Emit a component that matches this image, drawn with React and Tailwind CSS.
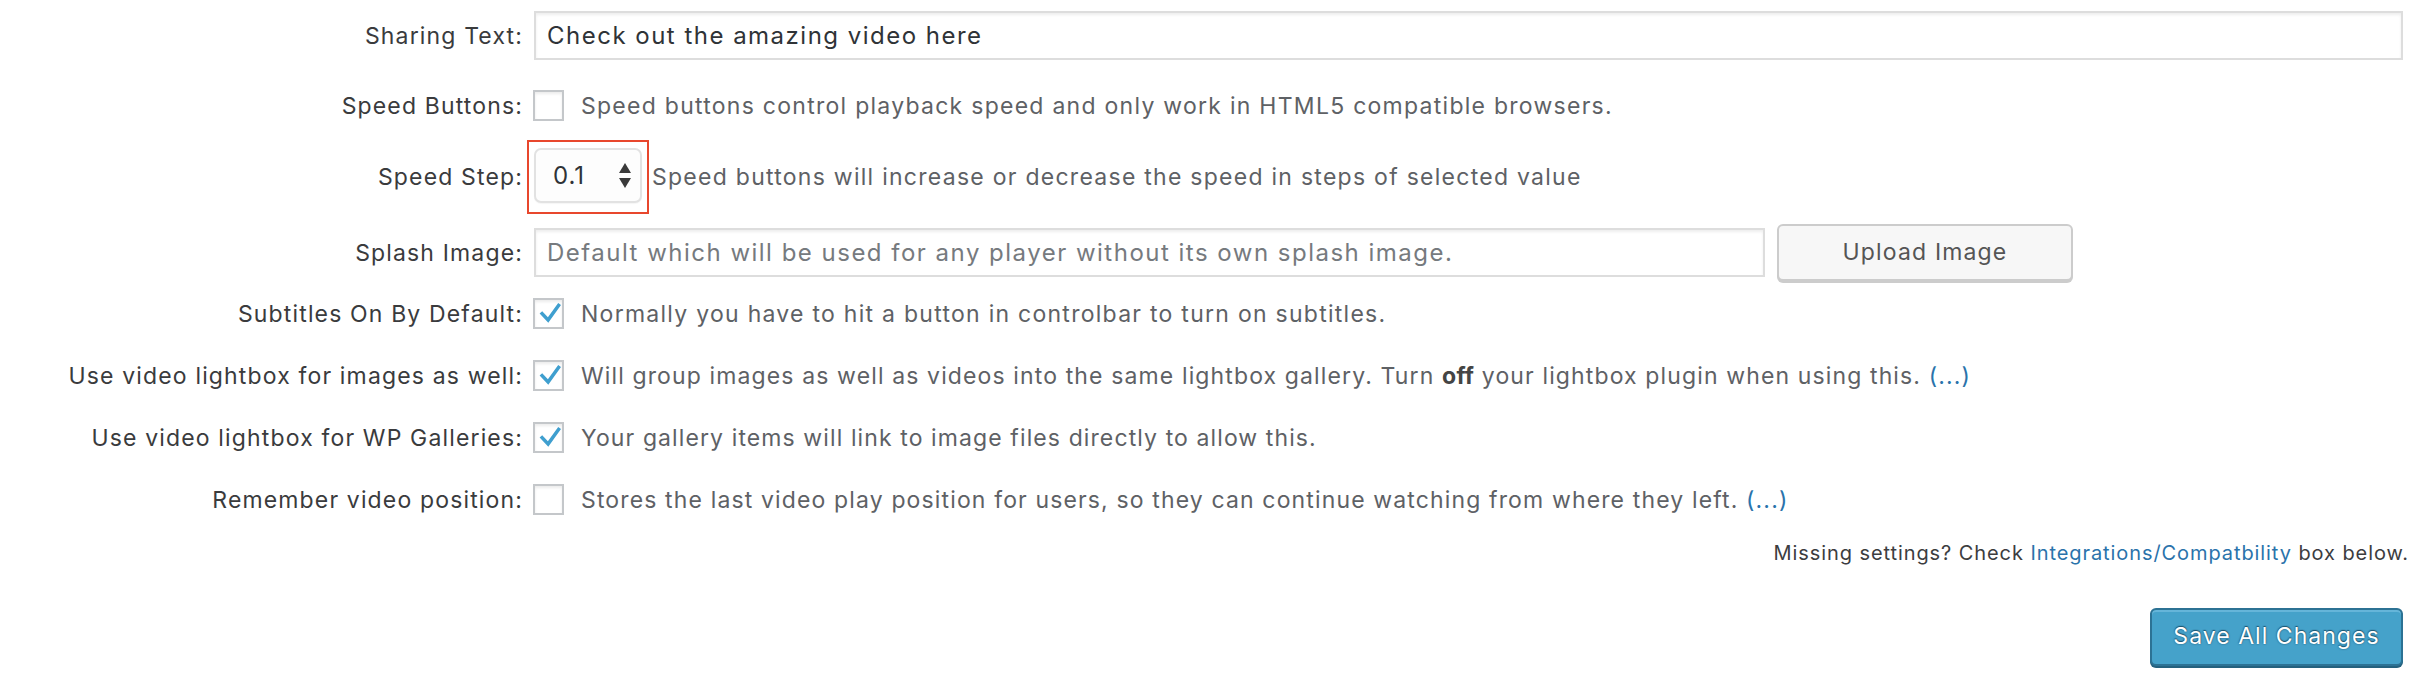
import React from "react";

function Tick() {
  return (
    <svg width="27" height="27" viewBox="2 2 27 27" className="block">
      <path d="M6.6 15.6 L9.2 13.2 L14.9 19.2 L25.2 5 L28 7.1 L15.3 24.8 Z" fill="#3f9fcf" />
    </svg>
  );
}

function Checkbox({ checked }) {
  return (
    <span className="ml-[-1px] flex h-[31px] w-[31px] shrink-0 items-center justify-center border-2 border-[#c4c7ca] bg-white shadow-[inset_0_2px_3px_rgba(0,0,0,0.08)]">
      {checked ? <Tick /> : null}
    </span>
  );
}

function Row({ label, children, className }) {
  return (
    <div className={"flex items-center " + (className || "")}>
      <div className="w-[523px] shrink-0 whitespace-nowrap text-right tracking-[0.05em] text-[#3a3b3d]">{label}</div>
      <div className="ml-[11px] flex min-w-0 flex-1 items-center">{children}</div>
    </div>
  );
}

function Desc({ children, className }) {
  return (
    <span className={"whitespace-nowrap text-[#5e6165] " + (className || "tracking-[0.055em]")}>{children}</span>
  );
}

function More() {
  return <span className="text-[#2a73ab]">(...)</span>;
}

export default function App() {
  return (
    <div className="h-[690px] w-[2432px] overflow-hidden bg-white pr-[29px] font-['Inter',sans-serif] text-[23px] leading-[28px] antialiased">
      <Row label="Sharing Text:" className="mt-[11px] h-[49px]">
        <div className="flex h-[49px] flex-1 items-center border-2 border-[#dddddd] bg-white pl-[11px] text-[24px] tracking-[0.062em] text-[#2f3337] shadow-[inset_0_2px_3px_rgba(0,0,0,0.07)]">
          Check out the amazing video here
        </div>
      </Row>

      <Row label="Speed Buttons:" className="mt-[30px] h-[31px]">
        <Checkbox checked={false} />
        <Desc className="ml-[17px] tracking-[0.055em]">
          Speed buttons control playback speed and only work in HTML5 compatible browsers.
        </Desc>
      </Row>

      <Row label="Speed Step:" className="mt-[19px] h-[74px]">
        <div className="ml-[-7px] flex h-[74px] w-[122px] shrink-0 border-2 border-[#e8472d] pl-[5px] pt-[6px]">
          <div className="flex h-[55px] w-[108px] items-center justify-between rounded-[7px] border-2 border-[#e2e2e2] bg-[#fdfdfd] pl-[17px] pr-[8px] text-[24px] tracking-[0.04em] text-[#2f3337] shadow-[0_1px_1px_rgba(0,0,0,0.04)]">
            <span>0.1</span>
            <svg width="14" height="26" viewBox="0 0 14 26" className="block">
              <path d="M7 0 L13 10 L1 10 Z" fill="#3a3a3a" />
              <path d="M1 15 L13 15 L7 25 Z" fill="#3a3a3a" />
            </svg>
          </div>
        </div>
        <Desc className="ml-[3px] tracking-[0.055em]">
          Speed buttons will increase or decrease the speed in steps of selected value
        </Desc>
      </Row>

      <Row label="Splash Image:" className="mt-[10px] h-[57px]">
        <div className="flex h-[49px] w-[1231px] shrink-0 items-center border-2 border-[#dddddd] bg-white pl-[11px] text-[24px] tracking-[0.062em] text-[#767a7e] shadow-[inset_0_2px_3px_rgba(0,0,0,0.07)]">
          Default which will be used for any player without its own splash image.
        </div>
        <button className="ml-[12px] flex h-[57px] w-[296px] shrink-0 items-center justify-center rounded-[6px] border-2 border-[#cccccc] bg-[#f7f7f7] pb-[2px] text-[23px] tracking-[0.05em] text-[#555555] shadow-[0_2px_0_#cccccc]">
          Upload Image
        </button>
      </Row>

      <Row label="Subtitles On By Default:" className="mt-[17px] h-[31px]">
        <Checkbox checked />
        <Desc className="ml-[17px] tracking-[0.055em]">
          Normally you have to hit a button in controlbar to turn on subtitles.
        </Desc>
      </Row>

      <Row label="Use video lightbox for images as well:" className="mt-[31px] h-[31px]">
        <Checkbox checked />
        <Desc className="ml-[17px] tracking-[0.049em]">
          Will group images as well as videos into the same lightbox gallery. Turn{" "}
          <b className="font-bold tracking-[0.01em] text-[#444444]">off</b> your lightbox plugin when using this. <More />
        </Desc>
      </Row>

      <Row label="Use video lightbox for WP Galleries:" className="mt-[31px] h-[31px]">
        <Checkbox checked />
        <Desc className="ml-[17px] tracking-[0.048em]">
          Your gallery items will link to image files directly to allow this.
        </Desc>
      </Row>

      <Row label="Remember video position:" className="mt-[31px] h-[31px]">
        <Checkbox checked={false} />
        <Desc className="ml-[17px] tracking-[0.0495em]">
          Stores the last video play position for users, so they can continue watching from where they left. <More />
        </Desc>
      </Row>

      <div className="mr-[-6px] mt-[24px] flex h-[28px] items-center justify-end whitespace-nowrap text-[20px] tracking-[0.046em] text-[#3c3d3f]">
        Missing settings? Check&nbsp;<span className="text-[#2a73ab]">Integrations/Compatbility</span>&nbsp;box below.
      </div>

      <div className="mt-[41px] flex justify-end">
        <button className="flex h-[58px] w-[253px] items-center justify-center rounded-[6px] border-2 border-[#2c7294] bg-[#45a2ca] pb-[2px] text-[23px] tracking-[0.045em] text-white shadow-[0_2px_0_#24617e,inset_0_2px_0_rgba(140,205,235,0.45)] [text-shadow:0_0_2px_#1d5570,0_-1px_1px_#1d5570]">
          Save All Changes
        </button>
      </div>
    </div>
  );
}
